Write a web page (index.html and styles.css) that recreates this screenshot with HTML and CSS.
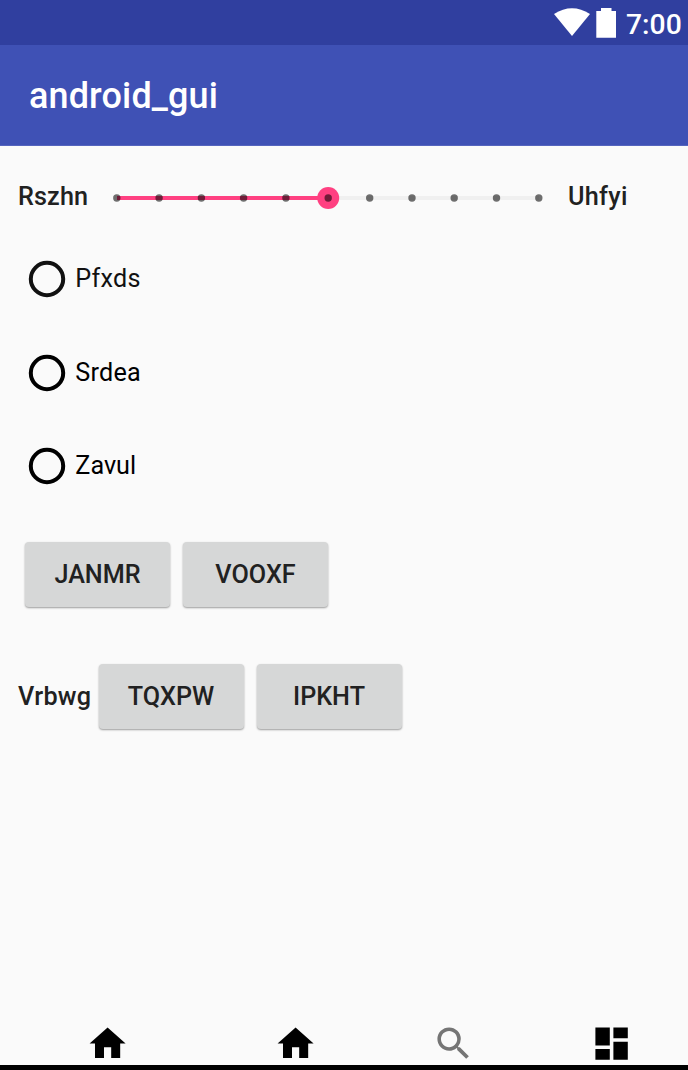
FILE: index.html
```html
<!DOCTYPE html>
<html lang="en">
<head>
<meta charset="utf-8">
<title>android_gui</title>
<link rel="stylesheet" href="styles.css">
</head>
<body>
<header>
  <div class="status-bar">
    <svg class="wifi" width="36" height="30" viewBox="0 0 36 30"><path d="M0 6Q18-5.500 36 6L18 28Z"/></svg>
    <svg class="battery" width="20" height="30" viewBox="0 0 20 30"><path d="M0.300 3H5V0H15.500V3H20V29.800H0.300Z"/></svg>
    <span class="clock">7:00</span>
  </div>
  <div class="app-bar"><h1>android_gui</h1></div>
</header>
<main>
  <div class="slider-row">
    <span class="label from">Rszhn</span>
    <svg class="slider" width="436" height="24" viewBox="0 0 436 24">
      <path d="M7 12H429" stroke="#f0f0f0" stroke-width="4"/>
      <path d="M7 12H218" stroke="#ff4081" stroke-width="4"/>
      <circle cx="218.2" cy="12" r="11" fill="#ff4081"/>
      <g fill="#000" fill-opacity=".56">
        <circle cx="6.8" cy="12" r="3.7"/><circle cx="49.1" cy="12" r="3.7"/><circle cx="91.4" cy="12" r="3.7"/><circle cx="133.6" cy="12" r="3.7"/><circle cx="175.9" cy="12" r="3.7"/><circle cx="218.2" cy="12" r="3.7"/><circle cx="259.7" cy="12" r="3.7"/><circle cx="302" cy="12" r="3.7"/><circle cx="344.2" cy="12" r="3.7"/><circle cx="386.5" cy="12" r="3.7"/><circle cx="428.8" cy="12" r="3.7"/>
      </g>
    </svg>
    <span class="label to">Uhfyi</span>
  </div>
  <div class="radios">
    <div class="radio first"><svg width="38" height="38"><circle cx="19" cy="19" r="16.2"/></svg><span>Pfxds</span></div>
    <div class="radio"><svg width="38" height="38"><circle cx="19" cy="19" r="16.2"/></svg><span>Srdea</span></div>
    <div class="radio"><svg width="38" height="38"><circle cx="19" cy="19" r="16.2"/></svg><span class="zavul">Zavul</span></div>
  </div>
  <div class="button-row">
    <button>JANMR</button><button>VOOXF</button>
  </div>
  <div class="button-row labelled">
    <span class="label">Vrbwg</span><button>TQXPW</button><button>IPKHT</button>
  </div>
</main>
<nav>
  <svg class="home" viewBox="0 0 24 24"><path d="M10 20v-6h4v6h5v-8h3L12 3 2 12h3v8z"/></svg>
  <svg class="home second" viewBox="0 0 24 24"><path d="M10 20v-6h4v6h5v-8h3L12 3 2 12h3v8z"/></svg>
  <svg class="search" viewBox="0 0 24 24"><path d="M15.5 14h-.79l-.28-.27A6.47 6.47 0 0 0 16 9.500 6.500 6.500 0 1 0 9.500 16c1.610 0 3.090-.59 4.230-1.570l.27.28v.79l5 4.990L20.490 19l-4.990-5zm-6 0C7.010 14 5 11.990 5 9.500S7.010 5 9.500 5 14 7.010 14 9.500 11.990 14 9.500 14z"/></svg>
  <svg class="dashboard" viewBox="0 0 24 24"><path d="M3 13h8V3H3v10zm0 8h8v-6H3v6zm10 0h8V11h-8v10zm0-18v6h8V3h-8z"/></svg>
</nav>
</body>
</html>
```
FILE: styles.css
```css
* { box-sizing: border-box; }
body {
  margin: 0;
  height: 1070px;
  display: flex;
  flex-direction: column;
  overflow: hidden;
  background: #fafafa;
  color: #212121;
  font: 25.2px/30px Roboto, sans-serif;
}
svg { display: block; flex: none; }
.status-bar {
  height: 45px;
  display: flex;
  align-items: flex-start;
  justify-content: flex-end;
  padding: 8px 6px 0 0;
  background: #303f9f;
  color: #fff;
  fill: #fff;
}
.battery { margin-left: 6px; }
.clock {
  width: 56px;
  margin-left: 10px;
  font-size: 28.3px;
  line-height: 33px;
  font-weight: 500;
  white-space: nowrap;
}
.app-bar {
  height: 101px;
  padding: 2px 29px 0;
  display: flex;
  align-items: center;
  background: #3f51b5;
  border-bottom: 1px solid #5565be;
}
h1 { margin: 0; color: #fff; font-size: 36px; line-height: 44px; font-weight: 500; letter-spacing: .13px; }
main { flex: 1; }
.slider-row {
  height: 60px;
  margin-top: 22px;
  padding-left: 18px;
  display: flex;
  align-items: center;
}
.label { font-weight: 500; letter-spacing: .3px; white-space: nowrap; }
.slider-row .label { padding-bottom: 2px; }
.from { width: 92px; letter-spacing: .15px; }
.to { margin-left: 22px; }
.radios { margin-top: 4.5px; }
.radio {
  height: 93.6px;
  display: flex;
  align-items: center;
  gap: 9.3px;
  padding-left: 28px;
  color: #000;
  letter-spacing: .25px;
}
.zavul { letter-spacing: 0; }
.radio circle { fill: none; stroke: #000; stroke-width: 4px; }
.first { color: #111; }
.first circle { stroke: #111; }
.button-row {
  margin-top: 28.7px;
  padding-left: 25px;
  display: flex;
  align-items: center;
  gap: 13px;
}
.labelled { margin-top: 57px; padding-left: 18px; }
.labelled .label { width: 67.5px; padding-top: 2px; }
button {
  width: 145px;
  height: 65px;
  padding: 1px 0 0;
  border: 0;
  border-radius: 4px;
  background: #d6d7d7;
  box-shadow: 0 1px 2px rgba(0, 0, 0, .38);
  color: #212121;
  font: 500 25.2px/30px Roboto, sans-serif;
}
nav {
  height: 49px;
  padding-left: 86.4px;
  display: flex;
  align-items: flex-start;
  border-bottom: 5px solid #000;
}
nav svg { width: 43.2px; height: 43.2px; margin-top: 1px; }
.second { margin-left: 144px; }
.search { margin-left: 115.2px; fill: #757575; }
.dashboard { margin-left: 115.2px; }
```
